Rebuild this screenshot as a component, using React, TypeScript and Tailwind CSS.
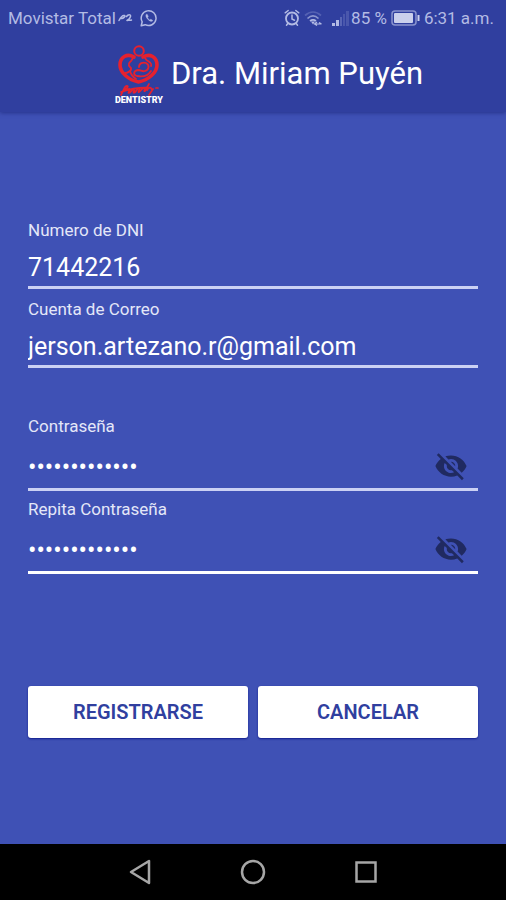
import { useState } from 'react';

function StatusBar() {
  return (
    <div className="flex h-9 items-center justify-between pr-3 pl-2 text-[17px] leading-5 text-[#b3bbe4]">
      <div className="flex items-center">
        <span>Movistar Total</span>
        <svg className="mr-1.5 ml-0.5" width="16" height="12" viewBox="0 0 16 12" fill="none" stroke="currentColor" strokeWidth="1.500" strokeLinecap="round" strokeLinejoin="round">
          <path d="M1 8.500c1.500-3 4-5.500 5.500-5S5 7 3.500 6.500M8.500 4.500c1.500-2.500 4.500-2.500 4 0S10 8 9 8.500c1.500-.8 3 .3 4.500-.5" />
        </svg>
        <svg width="18" height="18" viewBox="0 0 18 18" fill="none" stroke="currentColor" strokeWidth="1.500" strokeLinejoin="round">
          <path d="M1.200 16.800l1-4A7.400 7.400 0 1 1 5.200 15.700z" />
          <path d="M6.500 5.200c-1.500 1.500.2 4 1.800 5.500s3.500 2.400 4.500.8l-2-1.300-1 .9C8.600 10.400 8 9.700 7.500 8.700l.7-1-.7-2z" fill="currentColor" strokeWidth="0.500" />
        </svg>
      </div>
      <div className="flex items-center">
        <svg width="16" height="18" viewBox="0 0 16 18" fill="none" stroke="currentColor" strokeWidth="1.800" strokeLinecap="round">
          <circle cx="8" cy="9.500" r="6" />
          <path d="M8 6v4l2.500 1.200M1.200 3.800l3-2.300M14.800 3.800l-3-2.300M3.800 14.500l-1.300 1.700M12.200 14.500l1.300 1.700" strokeWidth="1.500" />
        </svg>
        <svg className="ml-1" width="18" height="16" viewBox="0 0 18 16" fill="none" strokeWidth="1.700">
          <path d="M1 5.500c5-4.500 11-4.500 16 0" stroke="#5461b3" />
          <path d="M3.500 8.500c3.500-3.300 7.500-3.300 11 0" stroke="#8c96cf" />
          <path d="M6 11c2-1.500 4-1.500 6 0" stroke="currentColor" />
          <path d="M7 11.500l2 3 2-3z" fill="currentColor" />
          <path d="M10.500 14h7M13 12l-2.500 2 2.500 1.500M15 12.500l2.500 1.500" stroke="currentColor" strokeWidth="1.200" />
        </svg>
        <svg className="mr-0.5 ml-2.5" width="17" height="15" viewBox="0 0 17 15" fill="#5865b5">
          <path d="M0 12h3v3H0zM4 9h3v6H4z" fill="#b3bbe4" />
          <path d="M8 6h2v9H8z" />
          <path d="M11 3h2v12h-2zM14 0h3v15h-3z" fill="#4a57ac" />
        </svg>
        <span>85 %</span>
        <svg className="mx-1" width="29" height="16" viewBox="0 0 29 16" fill="none">
          <rect x="1" y="1" width="24" height="14" rx="3" stroke="#8993ce" strokeWidth="1.500" />
          <rect x="3" y="3" width="19" height="10" rx="1" fill="#cbd0ec" />
          <path d="M27.500 5v6" stroke="#cbd0ec" strokeWidth="2" />
        </svg>
        <span>6:31 a.m.</span>
      </div>
    </div>
  );
}

function Logo() {
  return (
    <div className="flex w-12 flex-col items-center text-[#e6212e]">
      <svg width="46" height="51" viewBox="0 0 46 51" fill="none" stroke="currentColor" strokeLinecap="round" strokeLinejoin="round">
        <circle cx="23" cy="6" r="4.800" strokeWidth="2" />
        <path d="M18 12C11 8 4 12 4 20c0 8 9 15 18.500 17C32 35 41 28 41 20c0-8-7-12-14-8" strokeWidth="3.600" />
        <path d="M18 12c-2 1-2 4-4 5-3 3 0 5 1 6 1 3-4 5-6 5M28 12c2 1 1 3 4 4 3 2 4 3 3 5" strokeWidth="1.800" />
        <path d="M23 22c0-4 4-5 7-4 4 2 3 7-1 8-3 1-4-1-7-1-5 1-5 5-1 6 5 1 11 0 14-5M14 26c1 4 3 6 6 8" strokeWidth="1.800" />
        <path d="M5 50L9 42c2-2 4-1 2 1L7 46c4-1 6-3 7-2s-3 4-1 4 3-4 5-4-2 4 0 4 3-5 5-5-2 5 0 4 3-4 5-4-1 4 1 3l4-7M31 45c1-2 3-3 4-2s0 2 2 1l-4 6M5 47c9-3 20-5 30-4M40 43h2" strokeWidth="1.700" />
      </svg>
      <span className="text-[9px] leading-2 font-black text-white">DENTISTRY</span>
    </div>
  );
}

function EyeOff() {
  return (
    <svg className="size-[34px]" viewBox="0 0 24 24" fill="#202a61">
      <path d="M12 7c2.760 0 5 2.240 5 5 0 .65-.13 1.260-.36 1.830l2.920 2.920c1.510-1.260 2.700-2.890 3.430-4.750-1.730-4.390-6-7.500-11-7.500-1.400 0-2.740.25-3.980.7l2.160 2.160C10.740 7.130 11.350 7 12 7zM2 4.270l2.280 2.280.46.46C3.080 8.300 1.780 10.020 1 12c1.730 4.390 6 7.500 11 7.500 1.550 0 3.030-.3 4.380-.84l.42.42L19.730 22 21 20.730 3.270 3 2 4.270zM7.530 9.800l1.550 1.550c-.05.21-.08.43-.08.65 0 1.660 1.340 3 3 3 .22 0 .44-.03.65-.08l1.550 1.550c-.67.33-1.410.53-2.200.53-2.760 0-5-2.240-5-5 0-.79.2-1.530.53-2.200zm4.310-.78l3.150 3.150.02-.16c0-1.660-1.340-3-3-3l-.17.01z" />
    </svg>
  );
}

const labelStyle = 'block text-[17px] leading-5 text-[#e4e7f8]';
const inputStyle = 'block w-full min-w-0 bg-transparent text-[25px] leading-8 text-white outline-none';

function TextField({ id, label, type, initial }: { id: string; label: string; type: string; initial: string }) {
  const [value, setValue] = useState(initial);
  return (
    <div>
      <label htmlFor={id} className={labelStyle}>{label}</label>
      <div className="mt-3 border-b-3 border-[#cbd1f4] pb-0.5">
        <input id={id} type={type} value={value} onChange={(e) => setValue(e.target.value)} className={inputStyle} />
      </div>
    </div>
  );
}

function PasswordField({ id, label, active = false }: { id: string; label: string; active?: boolean }) {
  const [value, setValue] = useState('contrasena123');
  const [shown, setShown] = useState(false);
  return (
    <div>
      <label htmlFor={id} className={labelStyle}>{label}</label>
      <div className={`mt-3 box-content flex h-10 items-center border-b-3 ${active ? 'border-white' : 'border-[#cbd1f4]'}`}>
        <input id={id} type={shown ? 'text' : 'password'} value={value} onChange={(e) => setValue(e.target.value)} className={inputStyle} />
        <button type="button" aria-label="Mostrar contraseña" onClick={() => setShown(!shown)} className="mr-2.5 mb-1">
          <EyeOff />
        </button>
      </div>
    </div>
  );
}

const buttonStyle = 'h-13 flex-1 rounded-[3px] bg-white text-[20px] leading-6 font-semibold text-[#303f9f] shadow-[0_1px_2px_#101c8c]';

export default function App() {
  return (
    <div className="flex min-h-screen flex-col bg-[#3f51b5] font-[Roboto,sans-serif]">
      <header className="bg-[#303f9f] shadow-[0_1px_4px_#26338a]">
        <StatusBar />
        <div className="flex h-19 items-center justify-center gap-2 pl-8">
          <Logo />
          <h1 className="text-[31px] leading-10 text-white">Dra. Miriam Puyén</h1>
        </div>
      </header>
      <form className="flex flex-1 flex-col px-7 pt-27" onSubmit={(e) => e.preventDefault()}>
        <div className="flex flex-col gap-2.5">
          <TextField id="dni" label="Número de DNI" type="text" initial="71442216" />
          <TextField id="correo" label="Cuenta de Correo" type="email" initial="jerson.artezano.r@gmail.com" />
        </div>
        <div className="mt-12 flex flex-col gap-2">
          <PasswordField id="clave" label="Contraseña" />
          <PasswordField id="clave2" label="Repita Contraseña" active />
        </div>
        <div className="mt-28 flex gap-2.5">
          <button type="submit" className={buttonStyle}>REGISTRARSE</button>
          <button type="button" className={buttonStyle}>CANCELAR</button>
        </div>
      </form>
      <nav className="flex h-14 items-center justify-center gap-22 bg-black text-[#a6a6a6]">
        <button type="button" aria-label="Atrás">
          <svg width="24" height="26" viewBox="0 0 24 26" fill="none" stroke="currentColor" strokeWidth="2.500" strokeLinejoin="round">
            <path d="M21 2v22L3 13z" />
          </svg>
        </button>
        <button type="button" aria-label="Inicio">
          <svg width="26" height="26" viewBox="0 0 26 26" fill="none" stroke="currentColor" strokeWidth="2.500">
            <circle cx="13" cy="13" r="11" />
          </svg>
        </button>
        <button type="button" aria-label="Recientes">
          <svg width="24" height="24" viewBox="0 0 24 24" fill="none" stroke="currentColor" strokeWidth="2.500">
            <rect x="2.500" y="2.500" width="19" height="19" />
          </svg>
        </button>
      </nav>
    </div>
  );
}
